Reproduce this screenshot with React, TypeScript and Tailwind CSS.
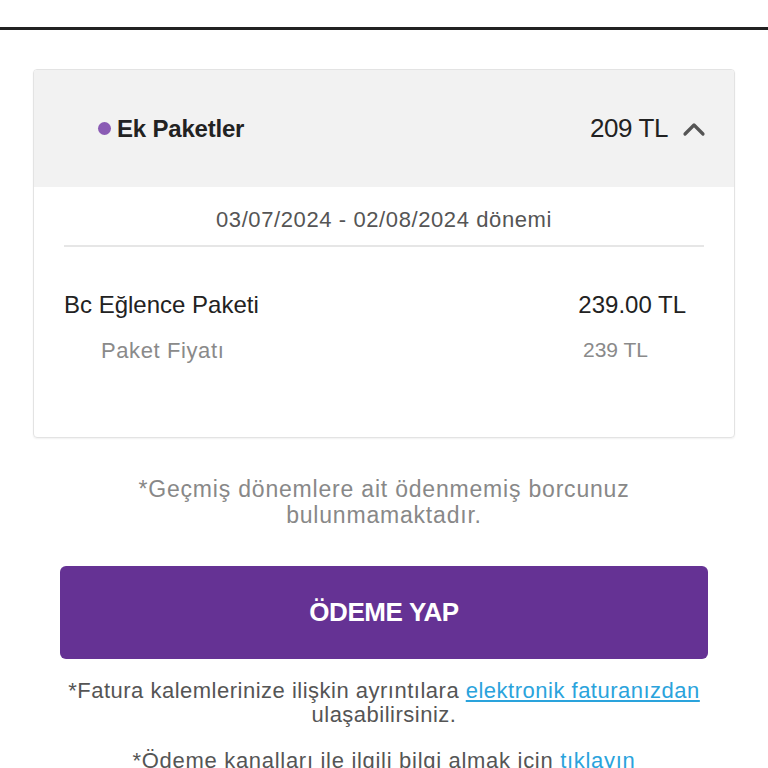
import React from 'react';

const font = { fontFamily: '"Liberation Sans", Arial, sans-serif' };

const ChevronUp: React.FC = () => (
  <svg width="24" height="16" viewBox="0 0 24 16" fill="none">
    <path d="M3 13L12 4L21 13" stroke="#555" strokeWidth="3.2" strokeLinecap="round" strokeLinejoin="round" />
  </svg>
);

const App: React.FC = () => {
  return (
    <div className="w-[768px] h-[768px] overflow-hidden bg-white" style={font}>
      {/* ust cizgi */}
      <div className="h-[27px]" />
      <div className="h-[3px] bg-[#222]" />

      <div className="px-[33px] pt-[39px]">
        {/* Ek paketler karti */}
        <div className="border border-[#e3e3e3] rounded-[4px] overflow-hidden shadow-[0_1px_2px_rgba(0,0,0,0.06)]">
          <div className="h-[117px] bg-[#f2f2f2] flex items-center justify-between pl-[64px] pr-[28px]">
            <div className="flex items-center gap-[6px]">
              <span className="w-[13px] h-[13px] rounded-full bg-[#8a5bb4]" />
              <span className="text-[24px] font-bold text-[#222] tracking-[-0.2px]">Ek Paketler</span>
            </div>
            <div className="flex items-center gap-[14px]">
              <span className="text-[26px] text-[#222] tracking-[-0.4px]">209 TL</span>
              <ChevronUp />
            </div>
          </div>

          <div className="px-[30px] pb-[74px]">
            <div className="h-[60px] flex items-end justify-center pb-[12px] border-b-2 border-[#e6e6e6]">
              <span className="text-[22px] leading-[26px] text-[#555] tracking-[0.6px]">03/07/2024 - 02/08/2024 dönemi</span>
            </div>
            <div className="flex justify-between items-center h-[28px] mt-[44px] pr-[18px]">
              <span className="text-[24px] text-[#222]">Bc Eğlence Paketi</span>
              <span className="text-[24px] text-[#222]">239.00 TL</span>
            </div>
            <div className="flex justify-between items-center h-[26px] mt-[18px] pl-[37px] pr-[56px]">
              <span className="text-[22px] text-[#8a8a8a] tracking-[0.6px]">Paket Fiyatı</span>
              <span className="text-[21px] text-[#8a8a8a]">239 TL</span>
            </div>
          </div>
        </div>

        <p className="mt-[38px] text-center text-[23px] leading-[26px] text-[#888] tracking-[0.8px] px-[60px]">
          *Geçmiş dönemlere ait ödenmemiş borcunuz bulunmamaktadır.
        </p>

        <div className="px-[27px] mt-[38px]">
          <button className="w-full h-[93px] bg-[#653294] rounded-[6px] text-white text-[26px] font-bold tracking-[-0.4px]">
            ÖDEME YAP
          </button>
        </div>

        <p className="mt-[20px] text-center text-[22px] leading-[24px] text-[#555] tracking-[0.5px] px-[10px]">
          *Fatura kalemlerinize ilişkin ayrıntılara{' '}
          <a className="text-[#2aa3dc] underline">elektronik faturanızdan</a>{' '}
          ulaşabilirsiniz.
        </p>

        <p className="mt-[22px] text-center text-[22px] leading-[24px] text-[#555] tracking-[0.7px]">
          *Ödeme kanalları ile ilgili bilgi almak için <a className="text-[#2aa3dc]">tıklayın</a>
        </p>
      </div>
    </div>
  );
};

export default App;
